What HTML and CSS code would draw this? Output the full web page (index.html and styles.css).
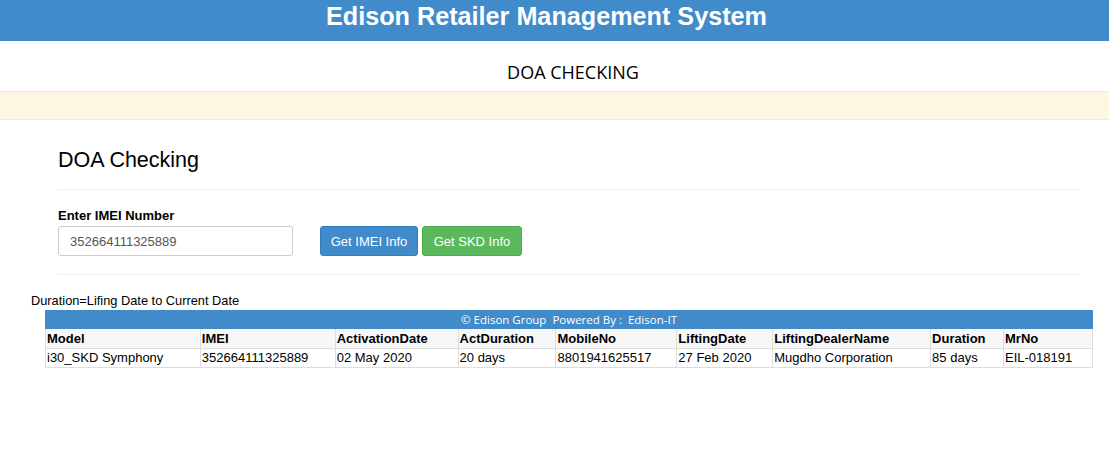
FILE: index.html
```html
<!DOCTYPE html>
<html>
<head>
<meta charset="utf-8">
<link rel="stylesheet" href="styles.css">
</head>
<body>
<header class="topbar">Edison Retailer Management System</header>
<div class="subtitle">DOA CHECKING</div>
<div class="notice"></div>
<main class="panel">
  <h2 class="panel-title">DOA Checking</h2>
  <div class="form-area">
    <div class="field">
      <label class="field-label">Enter IMEI Number</label>
      <input class="field-input" type="text" value="352664111325889">
    </div>
    <div class="actions">
      <button class="btn btn-blue">Get IMEI Info</button>
      <button class="btn btn-green">Get SKD Info</button>
    </div>
  </div>
</main>
<div class="note">Duration=Lifing Date to Current Date</div>
<table class="grid">
  <tr class="grid-banner"><td colspan="9">© Edison Group &nbsp;Powered By : &nbsp;Edison-IT</td></tr>
  <tr class="grid-head">
    <th class="c1">Model</th><th class="c2">IMEI</th><th class="c3">ActivationDate</th><th class="c4">ActDuration</th><th class="c5">MobileNo</th><th class="c6">LiftingDate</th><th class="c7">LiftingDealerName</th><th class="c8">Duration</th><th class="c9">MrNo</th>
  </tr>
  <tr class="grid-row">
    <td>i30_SKD Symphony</td><td>352664111325889</td><td>02 May 2020</td><td>20 days</td><td>8801941625517</td><td>27 Feb 2020</td><td>Mugdho Corporation</td><td>85 days</td><td>EIL-018191</td>
  </tr>
</table>
</body>
</html>
```
FILE: styles.css
```css
* { box-sizing: border-box; }
body {
  margin: 0;
  font-family: "Liberation Sans", Arial, sans-serif;
  color: #000;
  background: #fff;
}
.topbar {
  height: 41px;
  background: #428bca;
  color: #fff;
  font-weight: bold;
  font-size: 25.2px;
  text-align: center;
  line-height: 33px;
  padding-right: 16px;
}
.subtitle {
  height: 50px;
  font-family: "Open Sans", sans-serif;
  font-size: 18px;
  text-align: center;
  line-height: 62px;
  padding-left: 37px;
}
.notice {
  height: 29px;
  background: #fdf6e3;
  border-top: 1px solid #f5ead0;
  border-bottom: 1px solid #f5ead0;
}
.panel {
  margin: 0 30px 0 58px;
  padding-top: 28px;
}
.panel-title {
  margin: 0;
  font-size: 21.5px;
  font-weight: normal;
  line-height: 24px;
  padding-bottom: 17px;
  border-bottom: 1px solid #eee;
}
.form-area {
  display: flex;
  align-items: flex-end;
  padding-top: 18px;
  padding-bottom: 18px;
  border-bottom: 1px solid #eee;
}
.field { display: flex; flex-direction: column; }
.field-label {
  font-weight: bold;
  font-size: 13px;
  line-height: 15px;
  margin-bottom: 3px;
}
.field-input {
  width: 235px;
  height: 30px;
  border: 1px solid #ccc;
  border-radius: 3px;
  padding: 0 11px;
  font-family: "Liberation Sans", Arial, sans-serif;
  font-size: 13px;
  color: #555;
}
.actions { display: flex; gap: 4px; margin-left: 27px; }
.btn {
  height: 30px;
  border-radius: 3px;
  font-family: "Liberation Sans", Arial, sans-serif;
  font-size: 13px;
  color: #fff;
  padding: 0 6px;
}
.btn-blue { background: #428bca; border: 1px solid #357ebd; width: 98px; }
.btn-green { background: #5cb85c; border: 1px solid #4cae4c; width: 100px; }
.note {
  margin: 18px 0 0 31px;
  font-size: 12.8px;
  line-height: 15px;
}
.grid {
  margin: 2px 0 0 45px;
  width: 1048px;
  border-collapse: collapse;
  font-size: 13px;
}
.grid td, .grid th {
  border: 1px solid #ddd;
  padding: 0 1px;
  text-align: left;
  white-space: nowrap;
}
.grid-banner td {
  background: #428bca;
  color: #fff;
  text-align: center;
  font-family: "Open Sans", sans-serif;
  font-size: 11.5px;
  height: 18px;
  border-color: #428bca;
  line-height: 16px;
}
.grid-head th {
  background: #f7f7f7;
  font-weight: bold;
  font-size: 13px;
  height: 20px;
  line-height: 16px;
}
.grid-row td { height: 19px; line-height: 16px; }
.c1 { width: 155px; }
.c2 { width: 135px; }
.c3 { width: 123px; }
.c4 { width: 98px; }
.c5 { width: 121px; }
.c6 { width: 96px; }
.c7 { width: 158px; }
.c8 { width: 73px; }
.c9 { width: 89px; }
```
